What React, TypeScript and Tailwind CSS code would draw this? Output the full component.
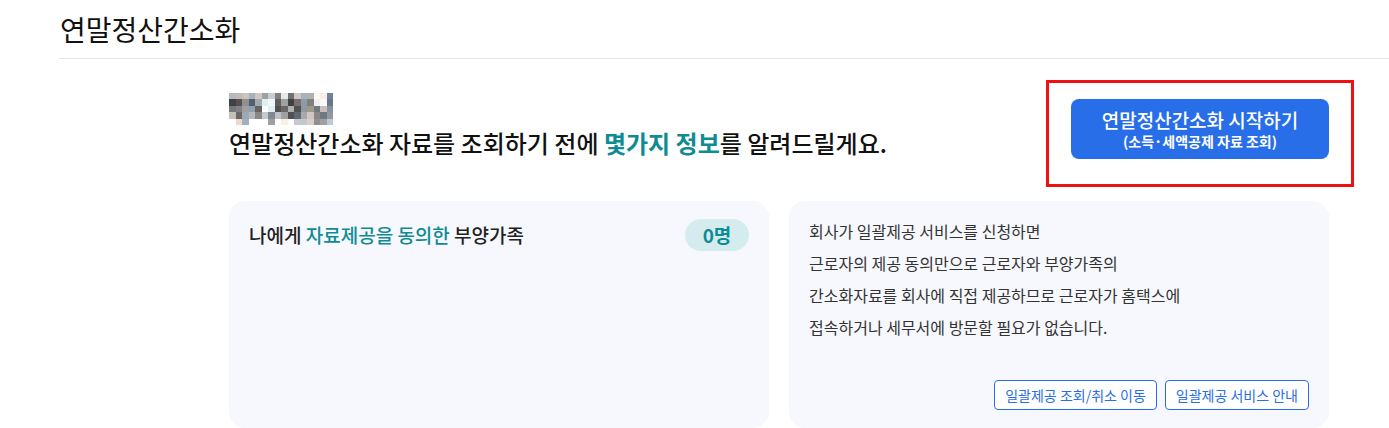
import React from "react";

// Pixelated (blurred) name block, 16 x 5 cells.
const NAME_PIXELS = [
  ["#b8b8c0", "#c0bab8", "#c8c4c0", "#a8b0b8", "#d0c8c0", "#a0a0a0", "#c8ccd0", "#808080", "#e8e8e8", "#707070", "#d0c8c0", "#a8b0b8", "#b0b0b0", "#fff8f0", "#f8f0e8", "#7080a0"],
  ["#404048", "#585050", "#909090", "#506070", "#a0a8b0", "#e0f0f0", "#f0f8f8", "#606060", "#a0a0a0", "#404040", "#787070", "#909aa8", "#808080", "#f0f0f0", "#f8f8f8", "#687888"],
  ["#787878", "#808088", "#a0a0a0", "#90a0b0", "#686060", "#f8ffff", "#e0f0f8", "#505050", "#686868", "#b0b0b0", "#505050", "#9098a0", "#a09888", "#707880", "#c8c0b8", "#8890a0"],
  ["#c8c0b8", "#686868", "#a0a8b0", "#b0b8c0", "#888888", "#c8c8c8", "#808890", "#c0c0c8", "#a0a0a0", "#505050", "#606870", "#a8a8b0", "#d0c8c0", "#888888", "#707880", "#9098a0"],
  ["#ffffff", "#f0d8d0", "#a0b0c0", "#ffffff", "#ffffff", "#ffffff", "#a0a0a0", "#ffffff", "#f8f0e8", "#ffffff", "#c8c8d0", "#c0c8d0", "#d8d0c8", "#909090", "#a0a0a0", "#c0c8d0"],
];

const BlurredName = () => (
  <div className="grid h-[32px] w-[104px] grid-cols-16 grid-rows-5">
    {NAME_PIXELS.flat().map((color, i) => (
      <div key={i} style={{ backgroundColor: color }} />
    ))}
  </div>
);

const OutlineButton = ({ label }: { label: string }) => (
  <button className="h-[30px] rounded-[4px] border border-[#2a6de8] bg-white px-[10px] text-[14px] leading-none text-[#2a6de8]">
    {label}
  </button>
);

export default function App() {
  return (
    <div
      className="h-[428px] overflow-hidden bg-white text-[#111]"
      style={{ fontFamily: '"Noto Sans CJK KR", "Noto Sans", sans-serif' }}
    >
      <div className="ml-[59px] border-b border-[#e6e6e6] pb-[11px] pt-[11px]">
        <h1 className="pl-[1px] text-[28px] font-normal leading-[36px]">연말정산간소화</h1>
      </div>

      <div className="ml-[229px] w-[1100px] pt-[34px]">
        <div className="flex items-start justify-between">
          <div className="flex flex-col gap-[2px]">
            <BlurredName />
            <p className="text-[24px] font-medium leading-[32px]">
              연말정산간소화 자료를 조회하기 전에{" "}
              <span className="font-bold text-[#0f8b94]">몇가지 정보</span>를 알려드릴게요.
            </p>
          </div>

          <div className="relative mt-[6px]">
            <button className="flex h-[60px] w-[258px] flex-col items-center justify-center rounded-[8px] bg-[#276ee8] text-white">
              <span className="text-[19px] font-medium leading-[23px]">연말정산간소화 시작하기</span>
              <span className="text-[14px] font-bold leading-[20px]">(소득·세액공제 자료 조회)</span>
            </button>
            {/* highlight annotation */}
            <div className="pointer-events-none absolute -bottom-[28px] -left-[25px] -right-[25px] -top-[19px] border-[3px] border-[#ee1111]" />
          </div>
        </div>

        <div className="mt-[42px] grid grid-cols-2 gap-[20px]">
          <div className="h-[227px] rounded-2xl bg-[#f6f8fd] px-[20px] pt-[18px]">
            <div className="flex items-center justify-between">
              <p className="text-[19px] font-medium text-[#222]">
                나에게 <span className="text-[#0f8b94]">자료제공을 동의한</span> 부양가족
              </p>
              <span className="flex h-[32px] w-[64px] items-center justify-center rounded-full bg-[#d4ecee] text-[19px] font-bold text-[#0e8c96]">
                0명
              </span>
            </div>
          </div>

          <div className="flex h-[227px] flex-col justify-between rounded-2xl bg-[#f6f8fd] px-[20px] pb-[18px] pt-[14px]">
            <p className="text-[16px] leading-[32px] text-[#333]">
              회사가 일괄제공 서비스를 신청하면
              <br />
              근로자의 제공 동의만으로 근로자와 부양가족의
              <br />
              간소화자료를 회사에 직접 제공하므로 근로자가 홈택스에
              <br />
              접속하거나 세무서에 방문할 필요가 없습니다.
            </p>
            <div className="flex justify-end gap-[8px]">
              <OutlineButton label="일괄제공 조회/취소 이동" />
              <OutlineButton label="일괄제공 서비스 안내" />
            </div>
          </div>
        </div>
      </div>
    </div>
  );
}
